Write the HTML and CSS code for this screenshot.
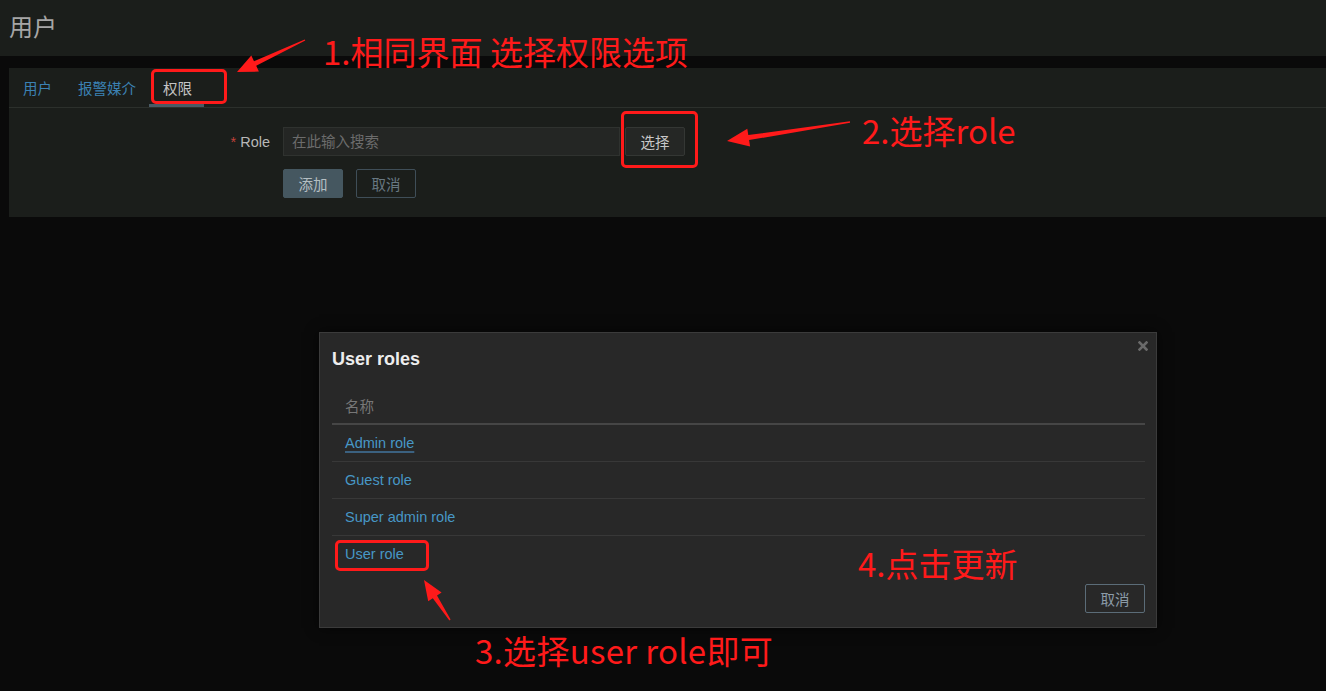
FILE: index.html
```html
<!DOCTYPE html>
<html lang="zh">
<head>
<meta charset="utf-8">
<title>用户</title>
<link rel="stylesheet" href="styles.css">
</head>
<body>
<header class="page-header">
  <h1 class="page-title">用户</h1>
</header>
<main class="content">
  <section class="panel">
    <nav class="tabs">
      <a class="tab">用户</a>
      <a class="tab">报警媒介</a>
      <a class="tab active">权限</a>
    </nav>
    <form class="form">
      <div class="form-row">
        <label class="form-label"><span class="req">*</span> Role</label>
        <div class="form-field">
          <input class="input" type="text" placeholder="在此输入搜索">
          <button type="button" class="btn-select">选择</button>
        </div>
      </div>
      <div class="form-row">
        <span class="form-label"></span>
        <div class="form-field actions">
          <button type="button" class="btn-primary">添加</button>
          <button type="button" class="btn-outline">取消</button>
        </div>
      </div>
    </form>
  </section>
</main>

<div class="modal">
  <div class="modal-title">User roles</div>
  <svg class="modal-close" width="10" height="10" viewBox="0 0 10 10"><path d="M1.5 1.5 L8.5 8.5 M8.5 1.5 L1.5 8.5" stroke="#6a6a6a" stroke-width="2.6" stroke-linecap="square"/></svg>
  <table class="roles">
    <thead><tr><th>名称</th></tr></thead>
    <tbody>
      <tr><td><a class="link focused">Admin role</a></td></tr>
      <tr><td><a class="link">Guest role</a></td></tr>
      <tr><td><a class="link">Super admin role</a></td></tr>
      <tr><td><a class="link">User role</a></td></tr>
    </tbody>
  </table>
  <div class="modal-footer">
    <button type="button" class="btn-outline light">取消</button>
  </div>
</div>

<div class="mark box1"></div>
<div class="mark box2"></div>
<div class="mark box3"></div>

<svg class="arrows" width="1326" height="691" viewBox="0 0 1326 691">
  <polygon fill="#ff1a1a" points="237,72 258.9,71.6 256.2,65.8 305.3,40.6 304.7,39.4 254.0,61.2 251.3,55.4"/>
  <polygon fill="#ff1a1a" points="727,141 750.1,146.5 749.1,140.1 850.1,122.7 849.9,121.3 748.3,135.1 747.3,128.7"/>
  <polygon fill="#ff1a1a" points="424,580 441.6,592.4 437,595.4 450.6,619.6 449.4,620.4 432.8,598.2 428.2,601.2"/>
</svg>

<div class="note note1">1.相同界面 选择权限选项</div>
<div class="note note2">2.选择role</div>
<div class="note note3">3.选择user role即可</div>
<div class="note note4">4.点击更新</div>
</body>
</html>
```
FILE: styles.css
```css
html, body {
  margin: 0;
  padding: 0;
  background: #0a0a0a;
  height: 100%;
}
body {
  font-family: "Liberation Sans", "Noto Sans CJK SC", sans-serif;
  font-size: 14.5px;
  color: #c0c0c0;
  position: relative;
  width: 1326px;
  height: 691px;
  overflow: hidden;
}
.page-header {
  height: 56px;
  background: #1b1e1b;
  display: flex;
  align-items: center;
  padding-left: 9px;
}
.page-title {
  margin: 0;
  font-size: 24px;
  font-weight: normal;
  color: #a6a6a6;
  line-height: 1;
}
.content {
  padding: 12px 0 0 9px;
}
.panel {
  background: #1b1e1b;
  height: 149px;
}
.tabs {
  display: flex;
  height: 39px;
  border-bottom: 1px solid #2c302c;
  padding-left: 1px;
}
.tab {
  display: flex;
  align-items: center;
  padding: 0 13px;
  color: #3b82b4;
}
.tab.active {
  color: #c4c4c4;
  box-shadow: inset 0 -3px 0 #4a5a64;
  padding: 0 12px 0 14px;
}
.form {
  padding-top: 19px;
  display: flex;
  flex-direction: column;
  gap: 13px;
}
.form-row {
  display: flex;
  gap: 13px;
  height: 29px;
  align-items: center;
}
.form-label {
  width: 261px;
  text-align: right;
  color: #b8b8b8;
}
.req {
  color: #c2413a;
}
.form-field {
  display: flex;
  height: 29px;
  gap: 5px;
}
.input {
  width: 337px;
  height: 29px;
  box-sizing: border-box;
  background: #242624;
  border: 1px solid #2f322f;
  color: #c0c0c0;
  font: inherit;
  padding: 0 8px;
  outline: none;
}
.input::placeholder {
  color: #6c6c6c;
}
button {
  font: inherit;
  height: 29px;
  width: 60px;
  box-sizing: border-box;
  padding: 0;
  border-radius: 2px;
  cursor: pointer;
}
.btn-select {
  background: #252725;
  border: 1px solid #343734;
  color: #c8c8c8;
}
.actions {
  gap: 13px;
}
.btn-primary {
  background: #455760;
  border: 1px solid #455760;
  color: #b4bec2;
}
.btn-outline {
  background: transparent;
  border: 1px solid #3f4e58;
  color: #687882;
}
.btn-outline.light {
  border-color: #5b6c78;
  color: #8c9ca8;
}

/* modal */
.modal {
  position: absolute;
  left: 319px;
  top: 332px;
  width: 838px;
  height: 296px;
  box-sizing: border-box;
  background: #282828;
  border: 1px solid #3b3b3b;
  box-shadow: 0 0 12px rgba(0, 0, 0, 0.6);
  padding: 0 11px 0 12px;
}
.modal-title {
  font-size: 18px;
  font-weight: bold;
  color: #ededed;
  line-height: 24px;
  padding-top: 14px;
  margin-bottom: 16px;
}
.modal-close {
  position: absolute;
  right: 8px;
  top: 8px;
}
.roles {
  width: 100%;
  border-collapse: collapse;
}
.roles th {
  text-align: left;
  font-weight: normal;
  color: #777777;
  height: 36px;
  padding: 0 13px;
  border-bottom: 2px solid #464646;
}
.roles td {
  height: 36px;
  padding: 0 13px;
  border-bottom: 1px solid #383838;
}
.roles tr:last-child td {
  border-bottom: none;
}
.link {
  color: #4797c6;
}
.link.focused {
  text-decoration: underline;
  text-decoration-color: #3b6180;
  text-decoration-thickness: 2px;
  text-underline-offset: 3px;
}
.modal-footer {
  display: flex;
  justify-content: flex-end;
  margin-top: 12px;
}

/* annotations */
.mark {
  position: absolute;
  border: 3px solid #ff1a1a;
  border-radius: 5px;
  box-sizing: border-box;
}
.box1 { left: 151px; top: 69px; width: 76px; height: 35px; }
.box2 { left: 621px; top: 111px; width: 77px; height: 57px; }
.box3 { left: 335px; top: 540px; width: 94px; height: 31px; }
.arrows {
  position: absolute;
  left: 0;
  top: 0;
  pointer-events: none;
}
.note {
  position: absolute;
  font-family: "Noto Sans CJK SC", sans-serif;
  font-size: 33px;
  line-height: 33px;
  color: #ff1a1a;
  white-space: nowrap;
}
.note1 { left: 323px; top: 35px; }
.note2 { left: 862px; top: 114px; }
.note3 { left: 475px; top: 634px; letter-spacing: 0.3px; }
.note4 { left: 858px; top: 547px; }
```
